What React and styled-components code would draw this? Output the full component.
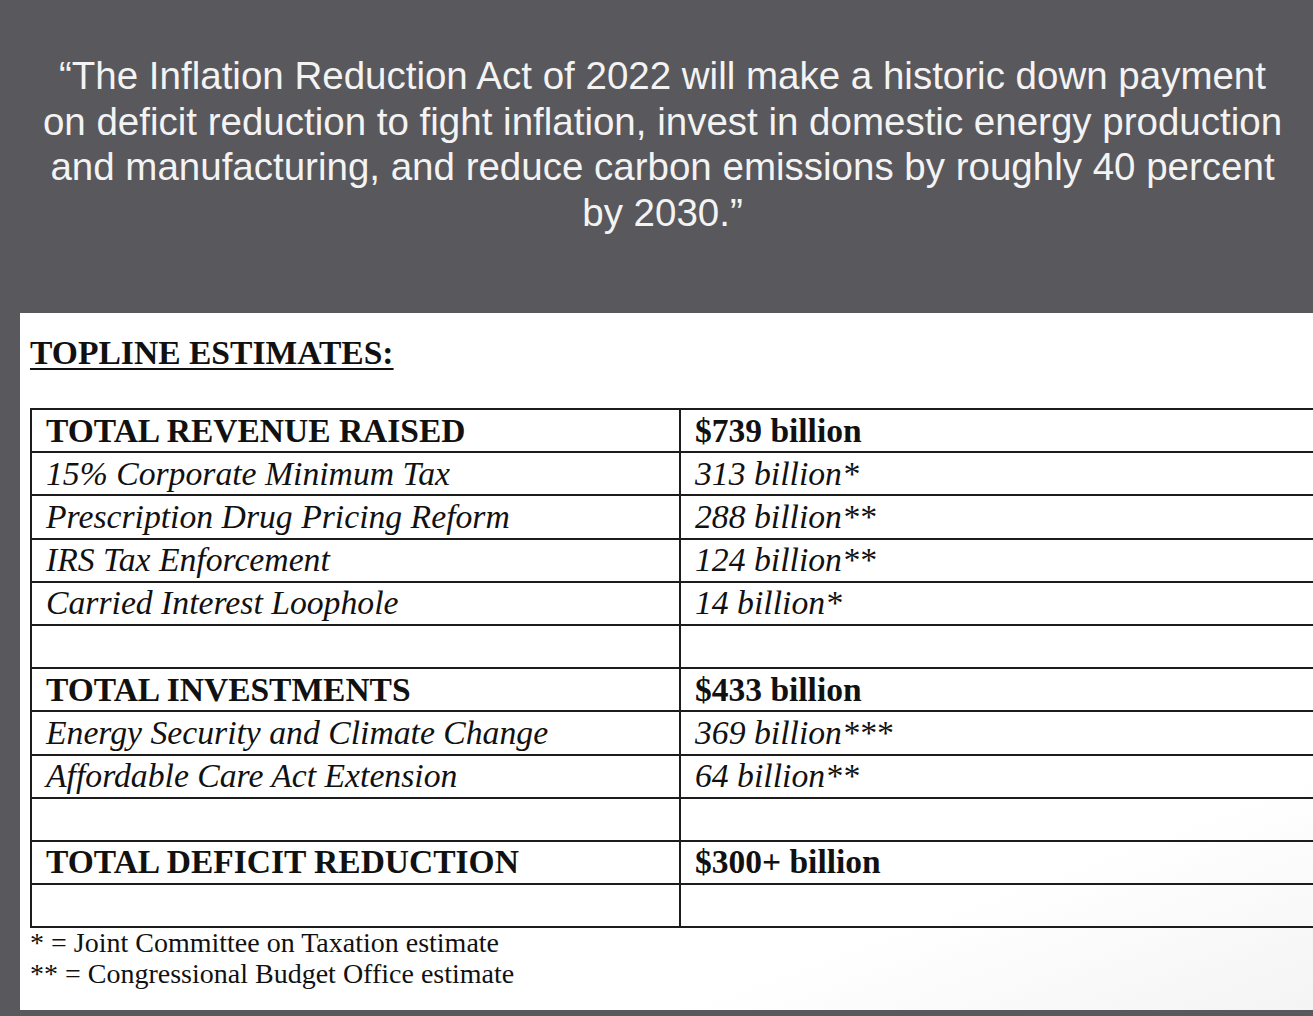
import React from 'react';
import styled, { createGlobalStyle } from 'styled-components';

const GlobalStyle = createGlobalStyle`
    html, body {
        margin: 0;
        padding: 0;
        background: #59585c;
        overflow: hidden;
    }
`;

const rows = [
    { label: 'TOTAL REVENUE RAISED', value: '$739 billion', total: true },
    { label: '15% Corporate Minimum Tax', value: '313 billion*' },
    { label: 'Prescription Drug Pricing Reform', value: '288 billion**' },
    { label: 'IRS Tax Enforcement', value: '124 billion**' },
    { label: 'Carried Interest Loophole', value: '14 billion*' },
    { blank: true },
    { label: 'TOTAL INVESTMENTS', value: '$433 billion', total: true },
    { label: 'Energy Security and Climate Change', value: '369 billion***' },
    { label: 'Affordable Care Act Extension', value: '64 billion**' },
    { blank: true },
    { label: 'TOTAL DEFICIT REDUCTION', value: '$300+ billion', total: true },
    { blank: true },
];

const quoteLines = [
    '\u201CThe Inflation Reduction Act of 2022 will make a historic down payment',
    'on deficit reduction to fight inflation, invest in domestic energy production',
    'and manufacturing, and reduce carbon emissions by roughly 40 percent',
    'by 2030.\u201D',
];

function App() {
    return (
        <>
            <GlobalStyle />
            <Page>
                <Quote>
                    {quoteLines.map((line) => (
                        <span key={line}>{line}</span>
                    ))}
                </Quote>
                <Sheet>
                    <Heading>TOPLINE ESTIMATES:</Heading>
                    <Table>
                        <colgroup>
                            <col style={{ width: 649 }} />
                            <col />
                        </colgroup>
                        <tbody>
                            {rows.map((row, i) => (
                                <tr key={i}>
                                    <Cell $total={row.total}>{row.blank ? '' : row.label}</Cell>
                                    <Cell $total={row.total}>{row.blank ? '' : row.value}</Cell>
                                </tr>
                            ))}
                        </tbody>
                    </Table>
                    <Notes>
                        <p>* = Joint Committee on Taxation estimate</p>
                        <p>** = Congressional Budget Office estimate</p>
                    </Notes>
                </Sheet>
            </Page>
        </>
    );
}

const Page = styled.div`
    width: 1313px;
    height: 1016px;
    background: #59585c;
    display: flex;
    flex-direction: column;
`;

const Quote = styled.div`
    height: 313px;
    box-sizing: border-box;
    padding: 53px 0 0 12px;
    font-family: "Liberation Sans", Arial, sans-serif;
    font-size: 38.5px;
    line-height: 45.5px;
    color: #f3f3f3;
    text-align: center;
    span {
        display: block;
        white-space: nowrap;
    }
`;

const Sheet = styled.div`
    margin-left: 20px;
    height: 697px;
    box-sizing: border-box;
    padding: 21px 0 0 10px;
    background: linear-gradient(160deg, #ffffff 80%, #f4f4f4 100%);
    overflow: hidden;
    font-family: "Liberation Serif", "Times New Roman", serif;
    color: #111;
`;

const Heading = styled.h2`
    margin: 0;
    font-size: 33.6px;
    line-height: 37px;
    font-weight: bold;
    text-decoration: underline;
    text-decoration-thickness: 2px;
    text-underline-offset: 4px;
    display: inline-block;
`;

const Table = styled.table`
    margin-top: 37px;
    width: 1320px;
    border-collapse: collapse;
    table-layout: fixed;
`;

const Cell = styled.td`
    height: 41.2px;
    padding: 0 0 0 14px;
    border: 2px solid #1c1c1c;
    font-size: ${(p) => (p.$total ? '33.5px' : '33.7px')};
    line-height: 38px;
    font-weight: ${(p) => (p.$total ? 'bold' : 'normal')};
    font-style: ${(p) => (p.$total ? 'normal' : 'italic')};
    white-space: nowrap;
    vertical-align: middle;
`;

const Notes = styled.div`
    margin-top: -1px;
    font-size: 28px;
    line-height: 31px;
    p {
        margin: 0;
        white-space: nowrap;
    }
`;

export default App;
